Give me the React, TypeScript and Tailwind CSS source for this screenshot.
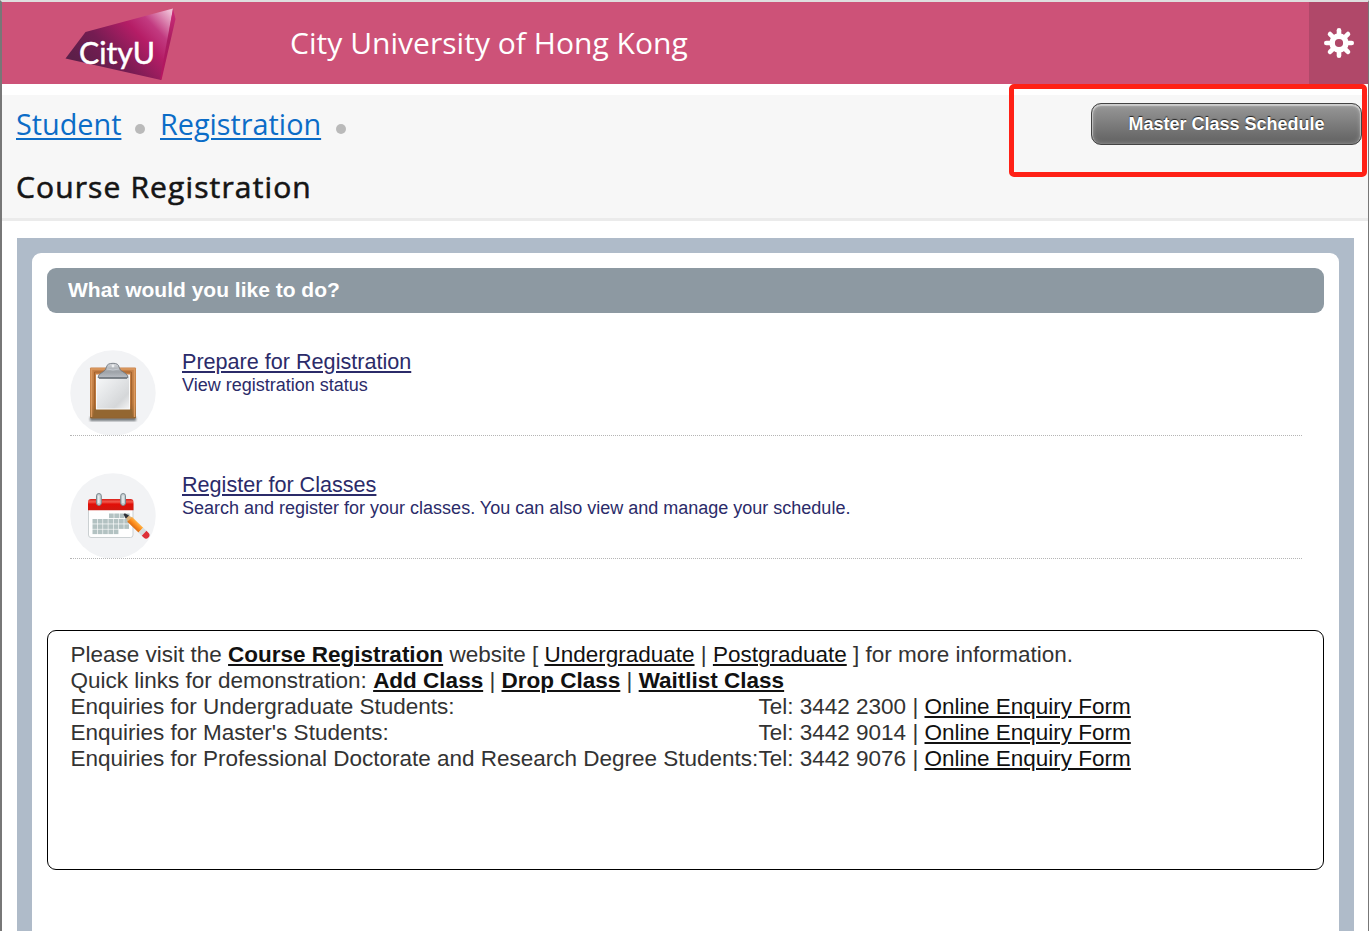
import React from "react";

const OPEN = "font-['Open_Sans','Noto_Sans',sans-serif]";

function Logo() {
  return (
    <svg width="112" height="74" viewBox="64 7 112 74" className="block">
      <defs>
        <linearGradient id="face" x1="85" y1="70" x2="160" y2="0" gradientUnits="userSpaceOnUse">
          <stop offset="0" stopColor="#5c1f49" />
          <stop offset="0.3" stopColor="#751c52" />
          <stop offset="0.62" stopColor="#b51d66" />
          <stop offset="0.78" stopColor="#c23a80" />
          <stop offset="1" stopColor="#f0bfd6" />
        </linearGradient>
        <linearGradient id="side" x1="172" y1="8" x2="161" y2="80" gradientUnits="userSpaceOnUse">
          <stop offset="0" stopColor="#cf2d7b" />
          <stop offset="0.45" stopColor="#a91c60" />
          <stop offset="1" stopColor="#b71561" />
        </linearGradient>
      </defs>
      <path d="M65.500 58.500 L85.500 32 L173 8.500 L161 80 Z" fill="url(#face)" />
      <path d="M173 8.500 L175.500 19 L161.500 80 L160 79 Z" fill="url(#side)" />
      <text x="79" y="63.500" fill="#fff" stroke="#fff" strokeWidth="0.500" fontFamily="Lato, sans-serif" fontSize="31" textLength="76" lengthAdjust="spacingAndGlyphs">CityU</text>
    </svg>
  );
}

function Gear() {
  return (
    <svg width="30" height="30" viewBox="-15 -15 30 30">
      <g stroke="#fff" strokeWidth="4.600" strokeLinecap="round" fill="none">
        {[0, 45, 90, 135, 180, 225, 270, 315].map((a) => (
          <path key={a} transform={`rotate(${a})`} d="M0 -8 V-12.700" />
        ))}
      </g>
      <circle r="6.900" fill="none" stroke="#fff" strokeWidth="5.600" />
    </svg>
  );
}

function Clipboard() {
  return (
    <svg width="86" height="86" viewBox="70 350 86 86" className="block">
      <defs>
        <linearGradient id="wood" x1="0" y1="0" x2="0" y2="1">
          <stop offset="0" stopColor="#c98249" />
          <stop offset="0.7" stopColor="#b9763a" />
          <stop offset="1" stopColor="#8f622f" />
        </linearGradient>
        <linearGradient id="paper" x1="0" y1="0" x2="1" y2="1">
          <stop offset="0" stopColor="#f8f9fa" />
          <stop offset="0.45" stopColor="#e3e5e7" />
          <stop offset="0.75" stopColor="#d5d7d9" />
          <stop offset="1" stopColor="#f5f5f5" />
        </linearGradient>
        <linearGradient id="clip" x1="0" y1="0" x2="0" y2="1">
          <stop offset="0" stopColor="#d4d7db" />
          <stop offset="0.6" stopColor="#9da2a8" />
          <stop offset="1" stopColor="#b8bcc3" />
        </linearGradient>
        <filter id="soft"><feGaussianBlur stdDeviation="0.8" /></filter>
      </defs>
      <circle cx="113" cy="393" r="42.700" fill="#f2f3f5" />
      <rect x="90" y="417" width="46" height="4" fill="#75797d" filter="url(#soft)" />
      <rect x="90" y="367.500" width="46" height="51" rx="1" fill="url(#wood)" />
      <path d="M91.500 417 V369 H134.500 V417" fill="none" stroke="#dc9a60" strokeWidth="1.500" />
      <path d="M94.500 409 V372 H131.500 V409" fill="none" stroke="#a2632f" />
      <path d="M94 409 H132 V417 H94 Z" fill="#936631" />
      <rect x="96.500" y="375" width="33" height="34" fill="url(#paper)" stroke="#fafafa" />
      <path d="M98 376 H128 L127 378.800 H99 Z" fill="#5d636b" />
      <path d="M98 377.500 Q98 374.500 102 372.500 Q106 370.500 106.500 367 Q107 363.300 113 363.300 Q118.500 363.300 119 367 Q119.500 370.500 124 372.500 Q128 374.500 128 377.500 Z" fill="url(#clip)" stroke="#747a82" strokeWidth="0.900" />
      <path d="M107 369 Q113 371 119 369" fill="none" stroke="#c5cad1" />
      <circle cx="113" cy="366" r="1.400" fill="#eceef0" />
    </svg>
  );
}

const cells: [number, number][] = [];
[[109, 4, 513.500], [92.500, 7, 519], [92.500, 7, 524.300], [92.500, 5, 529.500]].forEach(([x, n, y]) => {
  for (let i = 0; i < n; i++) cells.push([x + i * 5.300, y]);
});

function Calendar() {
  return (
    <svg width="86" height="86" viewBox="70 473 86 86" className="block">
      <defs>
        <linearGradient id="red" x1="0" y1="0" x2="0" y2="1">
          <stop offset="0" stopColor="#d81e17" />
          <stop offset="0.25" stopColor="#f2594c" />
          <stop offset="0.45" stopColor="#e20f08" />
          <stop offset="1" stopColor="#cf1a11" />
        </linearGradient>
        <linearGradient id="orange" x1="0" y1="0" x2="0" y2="1">
          <stop offset="0" stopColor="#ffb449" />
          <stop offset="0.5" stopColor="#fd8b1b" />
          <stop offset="1" stopColor="#d96b13" />
        </linearGradient>
      </defs>
      <circle cx="113" cy="516" r="42.700" fill="#f2f3f5" />
      <rect x="88.500" y="500" width="44.500" height="37.500" rx="2.500" fill="#fefefe" stroke="#cbd0d2" />
      <path d="M88 510.300 V502 Q88 499 91 499 H130.500 Q133.500 499 133.500 502 V510.300 Z" fill="url(#red)" />
      {cells.map(([x, y], i) => (
        <rect key={i} x={x} y={y} width="4.700" height="4.600" fill="#b3c2c2" />
      ))}
      {[98.800, 123].map((x) => (
        <g key={x}>
          <rect x={x - 2.300} y="493.500" width="4.800" height="12" rx="2.400" fill="#c4cdd1" stroke="#7c888e" strokeWidth="1" />
          <path d={`M${x} 495.500 V503`} stroke="#f0f4f5" strokeWidth="1.200" />
        </g>
      ))}
      <g transform="translate(124.700 514.500) rotate(44)">
        <path d="M0 0 L7.500 -3.400 V3.400 Z" fill="#dcb27b" />
        <path d="M-0.800 -0.800 L3.800 -2.300 V2.300 L-0.800 0.800 Z" fill="#303239" />
        <rect x="7" y="-3.400" width="15.500" height="6.800" fill="url(#orange)" />
        <rect x="22.500" y="-3.400" width="4.500" height="6.800" fill="#d6dddf" />
        <path d="M27 -3.400 H30 Q33 -3.200 33 0 Q33 3.200 30 3.400 H27 Z" fill="#dd3038" />
      </g>
    </svg>
  );
}

function Action({ icon, title, text }: { icon: React.ReactNode; title: string; text: string }) {
  return (
    <div className="mr-[22px] ml-[23px] flex h-[86px] items-start gap-[26px] border-b border-dotted border-[#b5b5b5] text-[#2b2b69]">
      <div className="h-[85px] w-[86px] shrink-0 overflow-hidden">{icon}</div>
      <div className="whitespace-nowrap">
        <a className="block text-[21.600px] leading-[24px] underline decoration-2 underline-offset-[2px]">{title}</a>
        <p className="text-[18px] leading-[22px]">{text}</p>
      </div>
    </div>
  );
}

function Link({ children, bold = false }: { children: React.ReactNode; bold?: boolean }) {
  return (
    <a className={`text-[#111] underline decoration-2 underline-offset-[2px] ${bold ? "font-bold" : ""}`}>{children}</a>
  );
}

const enquiries = [
  ["Enquiries for Undergraduate Students:", "2300"],
  ["Enquiries for Master's Students:", "9014"],
  ["Enquiries for Professional Doctorate and Research Degree Students:", "9076"],
];

export default function App() {
  return (
    <div className="relative flex h-[931px] w-[1369px] flex-col overflow-hidden border-t-2 border-r border-l-2 border-t-[#dedede] border-r-[#777] border-l-[#777] bg-white font-['Liberation_Sans',Arial,sans-serif]">
      <header className="flex h-[82px] shrink-0 items-start bg-[#cd5278]">
        <div className="w-[288px] pt-[5px] pl-[62px]"><Logo /></div>
        <div className={`flex-1 text-[30px] leading-[82px] tracking-[0.030px] whitespace-nowrap text-white ${OPEN}`}>City University of Hong Kong</div>
        <button className="flex h-[82px] w-[59px] items-center justify-center bg-[#b04869]"><Gear /></button>
      </header>

      <section className="mt-[11px] flex h-[126px] shrink-0 justify-between border-b-[3px] border-[#ebebeb] bg-[#f7f7f7] pl-[14px]">
        <div className={`whitespace-nowrap ${OPEN}`}>
          <nav className="mt-[8px] flex h-[42px] items-center text-[28.800px] leading-[42px] text-[#0b6cc7]">
            <a className="w-[105px] underline decoration-2 underline-offset-[3px]">Student</a>
            <span className="mt-[9px] mr-[15px] ml-[14px] size-[10px] rounded-full bg-[#bababa]" />
            <a className="w-[161px] underline decoration-2 underline-offset-[3px]">Registration</a>
            <span className="mt-[9px] ml-[15px] size-[10px] rounded-full bg-[#bababa]" />
          </nav>
          <h1 className="mt-[20px] text-[30px] leading-[44px] tracking-[1.130px] text-[#151515] [-webkit-text-stroke:0.600px_#151515]">Course Registration</h1>
        </div>
        <button className="mt-[8px] mr-[6px] h-[42px] w-[271px] rounded-[10px] border border-[#444] bg-gradient-to-b from-[#999] to-[#616161] pt-[1px] text-[18px] font-bold text-white shadow-[inset_0_1px_1px_1px_rgba(255,255,255,0.45),inset_0_0_4px_1px_rgba(255,255,255,0.25)] [text-shadow:0_-1px_1px_#222]">
          Master Class Schedule
        </button>
      </section>

      <main className="mt-[17px] mr-[14px] ml-[15px] flex-1 bg-[#afbbc9] px-[15px] pt-[15px]">
        <div className="h-full rounded-t-[9px] bg-white px-[15px] pt-[15px]">
          <h2 className="h-[45px] rounded-[9px] bg-[#8d99a2] pl-[21px] text-[21px] leading-[44px] font-bold text-white">What would you like to do?</h2>
          <div className="mt-[37px] flex flex-col gap-[37px]">
            <Action icon={<Clipboard />} title="Prepare for Registration" text="View registration status" />
            <Action icon={<Calendar />} title="Register for Classes" text="Search and register for your classes. You can also view and manage your schedule." />
          </div>
          <div className="mt-[71px] h-[240px] rounded-[9px] border border-black pt-[11px] pl-[22.500px] text-[22.500px] leading-[26px] whitespace-nowrap text-[#333]">
            <p>Please visit the <Link bold>Course Registration</Link> website [ <Link>Undergraduate</Link> | <Link>Postgraduate</Link> ] for more information.</p>
            <p>Quick links for demonstration: <Link bold>Add Class</Link> | <Link bold>Drop Class</Link> | <Link bold>Waitlist Class</Link></p>
            {enquiries.map(([label, ext]) => (
              <div key={ext} className="flex">
                <span className="w-[688px]">{label}</span>
                <span>Tel: 3442 {ext} | <Link>Online Enquiry Form</Link></span>
              </div>
            ))}
          </div>
        </div>
      </main>

      <div className="absolute top-[82px] left-[1007px] h-[93px] w-[358px] rounded-[5px] border-[5px] border-[#ff2116]" />
    </div>
  );
}
